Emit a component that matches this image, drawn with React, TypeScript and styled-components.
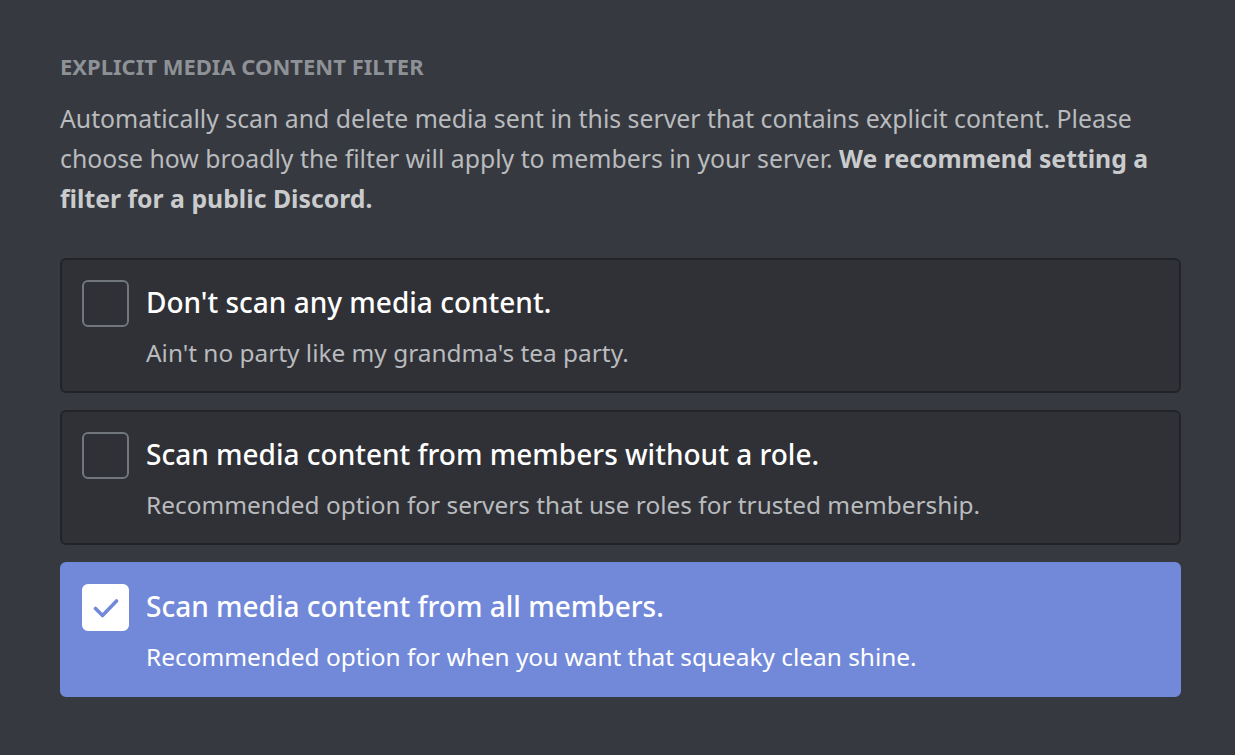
import React from "react";
import styled, { createGlobalStyle } from "styled-components";

const Global = createGlobalStyle`
  html, body { margin: 0; padding: 0; background: #36393f; }
  body { font-family: "Noto Sans", "Open Sans", sans-serif; }
`;

const Page = styled.div`
  width: 1235px;
  height: 755px;
  box-sizing: border-box;
  padding: 52px 54px 0 60px;
  background: #36393f;
`;

const Heading = styled.h2`
  margin: 0;
  font-size: 22px;
  line-height: 28px;
  font-weight: 700;
  color: #8e9297;
  text-transform: uppercase;
`;

const Description = styled.p`
  margin: 18px 0 0 0;
  font-size: 24.8px;
  line-height: 40px;
  color: #b9bbbe;
  strong { font-weight: 700; color: #c9cbcd; }
`;

const Options = styled.div`
  margin-top: 40px;
  display: flex;
  flex-direction: column;
  gap: 17px;
  width: 1121px;
`;

const Card = styled.div<{ $selected?: boolean }>`
  box-sizing: border-box;
  height: 135px;
  display: flex;
  align-items: flex-start;
  gap: 17px;
  padding: 20px 20px 0 20px;
  border-radius: 6px;
  background: ${(p) => (p.$selected ? "#7289da" : "#2f3136")};
  border: 2px solid ${(p) => (p.$selected ? "#7289da" : "#232428")};
  cursor: pointer;
`;

const Box = styled.div<{ $checked?: boolean }>`
  flex: none;
  box-sizing: border-box;
  width: 47px;
  height: 47px;
  border-radius: 6px;
  border: 2px solid ${(p) => (p.$checked ? "#ffffff" : "#72767d")};
  background: ${(p) => (p.$checked ? "#ffffff" : "transparent")};
  display: flex;
  align-items: center;
  justify-content: center;
`;

const Text = styled.div`
  display: flex;
  flex-direction: column;
`;

const Title = styled.div`
  font-size: 28px;
  line-height: 40px;
  font-weight: 500;
  color: #ffffff;
  margin-top: 2px;
`;

const Sub = styled.div<{ $selected?: boolean }>`
  margin-top: 16px;
  font-size: 24.4px;
  line-height: 30px;
  color: ${(p) => (p.$selected ? "#ffffff" : "#b9bbbe")};
`;

const options = [
  {
    title: "Don't scan any media content.",
    sub: "Ain't no party like my grandma's tea party.",
  },
  {
    title: "Scan media content from members without a role.",
    sub: "Recommended option for servers that use roles for trusted membership.",
  },
  {
    title: "Scan media content from all members.",
    sub: "Recommended option for when you want that squeaky clean shine.",
  },
];

export default function App() {
  const selected = 2;
  return (
    <Page>
      <Global />
      <Heading>Explicit Media Content Filter</Heading>
      <Description>
        Automatically scan and delete media sent in this server that contains explicit content. Please
        choose how broadly the filter will apply to members in your server.{" "}
        <strong>We recommend setting a filter for a public Discord.</strong>
      </Description>
      <Options>
        {options.map((o, i) => (
          <Card key={i} $selected={i === selected}>
            <Box $checked={i === selected}>
              {i === selected && (
                <svg width="26" height="20" viewBox="0 0 26 20">
                  <path
                    d="M2.5 10.5L9.5 17.5L23.5 3"
                    fill="none"
                    stroke="#7289da"
                    strokeWidth="3.6"
                    strokeLinecap="round"
                    strokeLinejoin="round"
                  />
                </svg>
              )}
            </Box>
            <Text>
              <Title>{o.title}</Title>
              <Sub $selected={i === selected}>{o.sub}</Sub>
            </Text>
          </Card>
        ))}
      </Options>
    </Page>
  );
}
